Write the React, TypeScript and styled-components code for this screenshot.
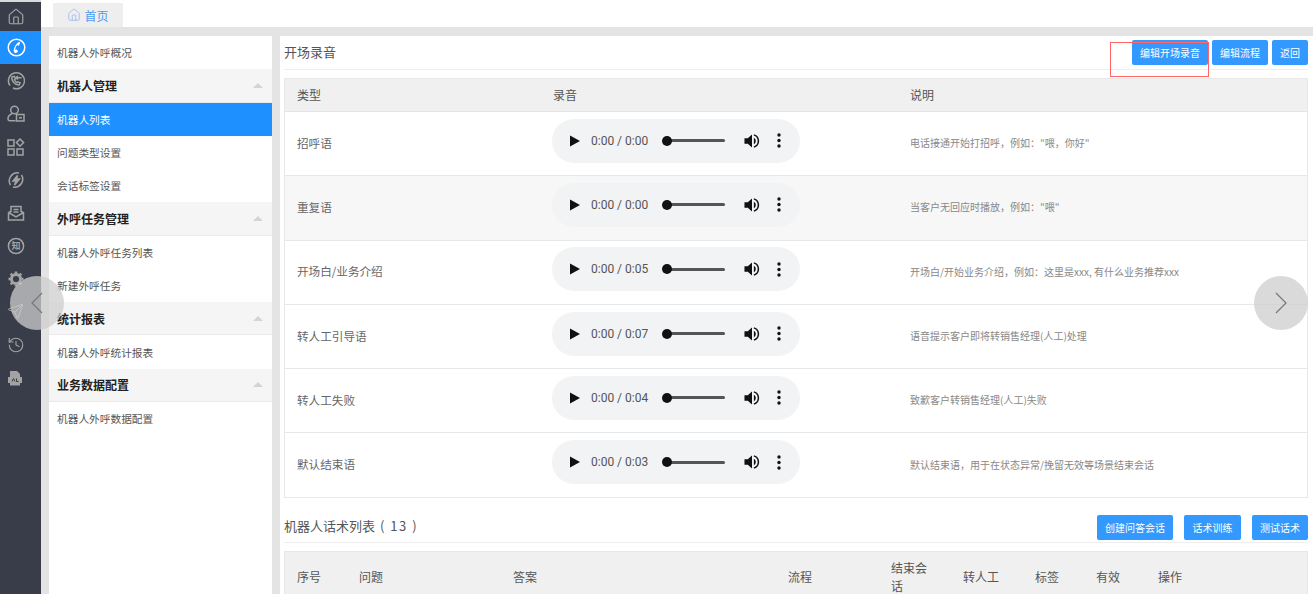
import React from "react";
import styled, { createGlobalStyle } from "styled-components";
import { Home, Send, History } from "lucide-react";

const GlobalStyle = createGlobalStyle`
  html, body {
    margin: 0;
    height: 594px;
    overflow: hidden;
    background: #fff;
    font-family: "Noto Sans CJK SC", "Liberation Sans", sans-serif;
    font-size: 12px;
    color: #555;
  }
`;

const Page = styled.div`
  position: relative;
  display: flex;
  width: 1313px;
  height: 594px;
  overflow: hidden;
`;

const Sidebar = styled.nav`
  flex: 0 0 41px;
  box-sizing: border-box;
  border-top: 2px solid #d9dadc;
  background: #383d49;
`;

const SideItem = styled.div<{ $active?: boolean }>`
  display: flex;
  align-items: center;
  justify-content: flex-start;
  height: 33px;
  padding-left: 7px;
  color: ${(p) => (p.$active ? "#fff" : "#a3a3a3")};
  background: ${(p) => (p.$active ? "#1e90ff" : "transparent")};

  &:first-child {
    height: 29px;
  }
`;

const Body = styled.div`
  flex: 1;
  display: flex;
  flex-direction: column;
  min-width: 0;
`;

const TabBar = styled.div`
  flex: 0 0 27px;
  display: flex;
  align-items: flex-end;
  padding-left: 12px;
`;

const Tab = styled.div`
  display: flex;
  align-items: center;
  justify-content: center;
  gap: 3px;
  width: 70px;
  height: 24px;
  background: #eee;
  color: #4a9bf5;
  font-size: 12px;
`;

const Content = styled.div`
  flex: 1;
  display: flex;
  gap: 8px;
  padding: 9px 0 0 8px;
  background: #e4e4e4;
  min-height: 0;
`;

const Menu = styled.aside`
  flex: 0 0 223px;
  background: #fff;
`;

const MenuItem = styled.div<{ $active?: boolean }>`
  display: flex;
  align-items: center;
  height: 33.27px;
  padding-left: 8px;
  font-size: 10.7px;
  color: ${(p) => (p.$active ? "#fff" : "#555")};
  background: ${(p) => (p.$active ? "#1e90ff" : "#fff")};
`;

const MenuGroup = styled.div`
  display: flex;
  align-items: center;
  justify-content: space-between;
  box-sizing: border-box;
  height: 33.27px;
  padding: 0 9px 0 8px;
  border-bottom: 1px solid #eaeaea;
  background: #f5f5f5;
  color: #222;
  font-size: 12px;
  font-weight: 700;
`;

const Caret = styled.span`
  width: 0;
  height: 0;
  border-left: 5px solid transparent;
  border-right: 5px solid transparent;
  border-bottom: 5px solid #d4d4d4;
`;

const Main = styled.main`
  flex: 1;
  min-width: 0;
  padding: 0 5px 0 4px;
  background: #fff;
`;

const SectionHead = styled.div<{ $first?: boolean }>`
  display: flex;
  align-items: ${(p) => (p.$first ? "center" : "flex-end")};
  justify-content: space-between;
  box-sizing: border-box;
  height: ${(p) => (p.$first ? "34px" : "45px")};
  margin-bottom: 8px;
  padding-bottom: ${(p) => (p.$first ? "0" : "2px")};
  border-bottom: 1px solid #eee;
`;

const SectionTitle = styled.div<{ $raised?: boolean }>`
  margin-bottom: ${(p) => (p.$raised ? "5px" : "2px")};
  font-size: 13px;
  color: #555;
`;

const Count = styled.span`
  margin-left: 5px;
  letter-spacing: 1.5px;
`;

const Buttons = styled.div<{ $gap: number }>`
  display: flex;
  gap: ${(p) => p.$gap}px;
`;

const Button = styled.div<{ $wide?: number }>`
  display: flex;
  align-items: center;
  justify-content: center;
  box-sizing: border-box;
  width: ${(p) => p.$wide}px;
  height: 25px;
  border-radius: 2px;
  background: #3399ff;
  color: #fff;
  font-size: 10px;
`;

const Table = styled.div`
  border: 1px solid #e8e8e8;
`;

const HeadRow = styled.div<{ $cols: string; $tall?: boolean }>`
  display: grid;
  grid-template-columns: ${(p) => p.$cols};
  align-items: center;
  height: ${(p) => (p.$tall ? "50px" : "32px")};
  background: #f0f0f0;
  border-bottom: 1px solid #e4e4e4;
  color: #555;
  font-size: 12px;
`;

const Row = styled.div<{ $cols: string; $shade?: boolean }>`
  display: grid;
  grid-template-columns: ${(p) => p.$cols};
  align-items: center;
  height: 63.3px;
  border-bottom: 1px solid #e8e8e8;
  background: ${(p) => (p.$shade ? "#f7f7f7" : "#fff")};

  &:last-child {
    border-bottom: 0;
  }
`;

const Cell = styled.div`
  padding: 0 0 2px 12px;
  font-size: 11.6px;
  color: #666;
`;

const PlayerCell = styled.div`
  padding-left: 11px;
`;

const HeadCell = styled.div<{ $wrap?: boolean }>`
  padding-left: 12px;
  line-height: 18px;
  max-width: ${(p) => (p.$wrap ? "37px" : "none")};
`;

const Note = styled(Cell)`
  font-size: 10px;
  color: #888;
`;

const Player = styled.div`
  display: flex;
  align-items: center;
  box-sizing: border-box;
  width: 248px;
  height: 44px;
  margin-top: -6px;
  border-radius: 22px;
  background: #f1f3f4;
  color: #111;
`;

const PlayGlyph = styled.svg`
  margin-left: 18px;
  flex: none;
`;

const Time = styled.span`
  width: 76px;
  margin-left: 11px;
  font-family: Roboto, "Liberation Sans", sans-serif;
  font-size: 12px;
  color: #555;
  white-space: nowrap;
`;

const Track = styled.div`
  position: relative;
  width: 58px;
  height: 3px;
  border-radius: 2px;
  background: #555;

  &::before {
    content: "";
    position: absolute;
    left: -5px;
    top: -3.5px;
    width: 10px;
    height: 10px;
    border-radius: 50%;
    background: #111;
  }
`;

const VolumeGlyph = styled.svg`
  margin-left: 19px;
  flex: none;
`;

const DotsGlyph = styled.svg`
  margin-left: 17px;
  flex: none;
`;

const Arrow = styled.div<{ $side: "left" | "right" }>`
  position: absolute;
  top: 276px;
  ${(p) => (p.$side === "left" ? "left: 10px;" : "left: 1254px;")}
  display: flex;
  align-items: center;
  justify-content: center;
  width: 54px;
  height: 54px;
  border-radius: 50%;
  background: rgba(205, 205, 205, 0.75);
  color: #777;
`;

const Highlight = styled.div`
  position: absolute;
  left: 1110px;
  top: 42px;
  box-sizing: border-box;
  width: 99px;
  height: 35px;
  border: 1px solid #f66;
  pointer-events: none;
`;

const stroke = { fill: "none", stroke: "currentColor", strokeWidth: 1.5 };

const RoboIcons = [
  <Home key="home" size={18} strokeWidth={1.6} />,
  <svg key="call" width="19" height="19" viewBox="0 0 19 19" {...stroke}>
    <circle cx="9.500" cy="9.500" r="8.300" />
    <path
      d="M12.800 3.800c-1 .2-1.500.6-2.300 1.300-2 1.800-3.500 4.700-3.800 7.200-.1 1.300.5 2.500 1.700 2.700.7.100 1.300-.3 2-.9l.7-.8-1.700-2.100-1.100.7c0-1.600.7-3.400 2-4.800l1.100.8 1.600-2.500z"
      fill="currentColor"
      stroke="none"
    />
  </svg>,
  <svg key="ring" width="18" height="18" viewBox="0 0 18 18" {...stroke}>
    <path d="M3 13.500A8 8 0 1 1 6 16" />
    <path d="M4.800 5c-.6 3.800 3 7.900 7.300 8.100l1-2.300-2.300-1-.9.800c-1.100-.6-2-1.700-2.400-3l1-.9-1.100-2.300z" />
    <path d="M10.800 4l-1.600 1.800 1.600 1.700M9.400 5.800H14.500" />
  </svg>,
  <svg key="user" width="18" height="18" viewBox="0 0 18 18" {...stroke}>
    <circle cx="7.500" cy="5" r="3.800" />
    <path d="M5 8.800c-3 1-4 3-4 5 0 1.200 1 2 2 2h5.500" />
    <rect x="9.500" y="9.500" width="7.500" height="6.500" />
    <path d="M12 12.800h3" />
  </svg>,
  <svg key="apps" width="18" height="18" viewBox="0 0 18 18" {...stroke}>
    <rect x="1" y="2" width="6" height="6" />
    <rect x="1" y="11" width="6" height="6" />
    <rect x="10" y="11" width="6" height="6" />
    <path d="M13 1l3.600 3.600L13 8.200 9.400 4.600z" />
  </svg>,
  <svg key="bolt" width="18" height="18" viewBox="0 0 18 18" {...stroke}>
    <path d="M3.500 14A8 8 0 0 1 12 2M14.500 4A8 8 0 0 1 6 16" />
    <path d="M10.500 4.500L6 10h3l-1.500 4L12.500 8H9.500z" fill="currentColor" />
  </svg>,
  <svg key="inbox" width="18" height="18" viewBox="0 0 18 18" {...stroke}>
    <path d="M4 8V2.500h10V8M6.500 5.500h5M6.500 8h5" />
    <path d="M1.500 8.500v7.500h15V8.500l-2.500-1M1.500 8.500L9 13l7.500-4.500M4 7.500l-2.500 1" />
  </svg>,
  <svg key="know" width="18" height="18" viewBox="0 0 18 18" {...stroke}>
    <circle cx="9" cy="9" r="7.600" />
    <text x="9" y="12.400" fontSize="9" textAnchor="middle" fill="currentColor" stroke="none" fontWeight="700">
      知
    </text>
  </svg>,
  <svg key="gear" width="18" height="18" viewBox="0 0 18 18">
    <circle cx="9" cy="9" r="4.600" fill="none" stroke="currentColor" strokeWidth="3" />
    <path
      d="M9 1.500v3M9 13.500v3M1.500 9h3M13.500 9h3M3.700 3.700l2.100 2.100M12.200 12.200l2.100 2.100M3.700 14.300l2.100-2.100M12.200 5.800l2.100-2.100"
      stroke="currentColor"
      strokeWidth="2.600"
    />
  </svg>,
  <Send key="send" size={17} strokeWidth={1.4} />,
  <History key="history" size={18} strokeWidth={1.5} />,
  <svg key="file" width="16" height="18" viewBox="0 0 16 18">
    <path d="M3 2h7l3 3v3H3z" fill="currentColor" />
    <rect x="1" y="8" width="14" height="6" fill="currentColor" />
    <path d="M3 14h10v2.500H3z" fill="currentColor" />
    <path d="M5 12.500l1.500-3 1.500 3M9.500 9.500v3h2" stroke="#383d49" fill="none" />
  </svg>,
];

type MenuEntry = { label: string; group?: boolean; active?: boolean };

const menuEntries: MenuEntry[] = [
  { label: "机器人外呼概况" },
  { label: "机器人管理", group: true },
  { label: "机器人列表", active: true },
  { label: "问题类型设置" },
  { label: "会话标签设置" },
  { label: "外呼任务管理", group: true },
  { label: "机器人外呼任务列表" },
  { label: "新建外呼任务" },
  { label: "统计报表", group: true },
  { label: "机器人外呼统计报表" },
  { label: "业务数据配置", group: true },
  { label: "机器人外呼数据配置" },
];

const greetCols = "256px 357px 1fr";
const greetings = [
  { type: "招呼语", time: "0:00 / 0:00", note: "电话接通开始打招呼，例如：\"喂，你好\"" },
  { type: "重复语", time: "0:00 / 0:00", note: "当客户无回应时播放，例如：\"喂\"", shade: true },
  { type: "开场白/业务介绍", time: "0:00 / 0:05", note: "开场白/开始业务介绍，例如：这里是xxx, 有什么业务推荐xxx" },
  { type: "转人工引导语", time: "0:00 / 0:07", note: "语音提示客户即将转销售经理(人工)处理" },
  { type: "转人工失败", time: "0:00 / 0:04", note: "致歉客户转销售经理(人工)失败" },
  { type: "默认结束语", time: "0:00 / 0:03", note: "默认结束语，用于在状态异常/挽留无效等场景结束会话" },
];

const scriptCols = "62px 154px 275px 103px 72px 72px 61px 62px 1fr";
const scriptHeads = ["序号", "问题", "答案", "流程", "结束会话", "转人工", "标签", "有效", "操作"];

const AudioPlayer = ({ time }: { time: string }) => (
  <Player>
    <PlayGlyph width="10" height="12" viewBox="0 0 10 12">
      <path d="M0 0.500L10 6 0 11.500z" fill="#111" />
    </PlayGlyph>
    <Time>{time}</Time>
    <Track />
    <VolumeGlyph width="16" height="16" viewBox="0 0 17 16">
      <path d="M0.500 5v6h3.500l4.500 4V1L4 5z" fill="#111" />
      <path d="M10.500 4.500a4 4 0 0 1 0 7z" fill="#111" />
      <path d="M10.500 1.500a6.800 6.800 0 0 1 0 13" fill="none" stroke="#111" strokeWidth="1.600" />
    </VolumeGlyph>
    <DotsGlyph width="4" height="15" viewBox="0 0 4 15">
      <circle cx="2" cy="2" r="1.700" fill="#111" />
      <circle cx="2" cy="7.500" r="1.700" fill="#111" />
      <circle cx="2" cy="13" r="1.700" fill="#111" />
    </DotsGlyph>
  </Player>
);

export default function App() {
  return (
    <Page>
      <GlobalStyle />
      <Sidebar>
        {RoboIcons.map((icon, i) => (
          <SideItem key={i} $active={i === 1}>
            {icon}
          </SideItem>
        ))}
      </Sidebar>
      <Body>
        <TabBar>
          <Tab>
            <Home size={14} strokeWidth={1.4} color="#9db7f0" />
            首页
          </Tab>
        </TabBar>
        <Content>
          <Menu>
            {menuEntries.map((entry) =>
              entry.group ? (
                <MenuGroup key={entry.label}>
                  {entry.label}
                  <Caret />
                </MenuGroup>
              ) : (
                <MenuItem key={entry.label} $active={entry.active}>
                  {entry.label}
                </MenuItem>
              ),
            )}
          </Menu>
          <Main>
            <SectionHead $first>
              <SectionTitle>开场录音</SectionTitle>
              <Buttons $gap={4}>
                <Button $wide={76}>编辑开场录音</Button>
                <Button $wide={56}>编辑流程</Button>
                <Button $wide={36}>返回</Button>
              </Buttons>
            </SectionHead>
            <Table>
              <HeadRow $cols={greetCols}>
                <HeadCell>类型</HeadCell>
                <HeadCell>录音</HeadCell>
                <HeadCell>说明</HeadCell>
              </HeadRow>
              {greetings.map((g) => (
                <Row key={g.type} $cols={greetCols} $shade={g.shade}>
                  <Cell>{g.type}</Cell>
                  <PlayerCell>
                    <AudioPlayer time={g.time} />
                  </PlayerCell>
                  <Note>{g.note}</Note>
                </Row>
              ))}
            </Table>
            <SectionHead>
              <SectionTitle $raised>
                机器人话术列表<Count>( 13 )</Count>
              </SectionTitle>
              <Buttons $gap={11}>
                <Button $wide={76}>创建问答会话</Button>
                <Button $wide={57}>话术训练</Button>
                <Button $wide={56}>测试话术</Button>
              </Buttons>
            </SectionHead>
            <Table>
              <HeadRow $cols={scriptCols} $tall>
                {scriptHeads.map((h) => (
                  <HeadCell key={h} $wrap={h === "结束会话"}>
                    {h}
                  </HeadCell>
                ))}
              </HeadRow>
            </Table>
          </Main>
        </Content>
      </Body>
      <Arrow $side="left">
        <svg width="12" height="22" viewBox="0 0 12 22" fill="none" stroke="currentColor" strokeWidth="1.2">
          <path d="M11 1L1 11l10 10" />
        </svg>
      </Arrow>
      <Arrow $side="right">
        <svg width="12" height="22" viewBox="0 0 12 22" fill="none" stroke="currentColor" strokeWidth="1.2">
          <path d="M1 1l10 10L1 21" />
        </svg>
      </Arrow>
      <Highlight />
    </Page>
  );
}
